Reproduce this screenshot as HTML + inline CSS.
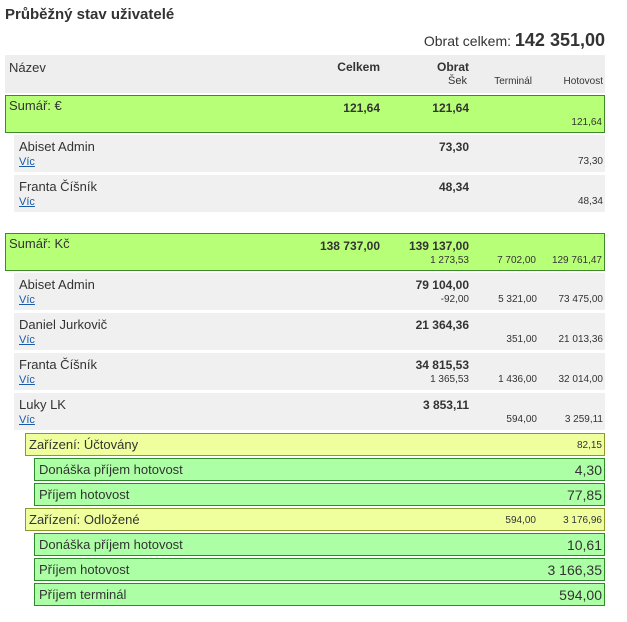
<!DOCTYPE html>
<html><head><meta charset="utf-8">
<style>
*{margin:0;padding:0;box-sizing:border-box}
body{width:627px;height:622px;background:#fff;font-family:"Liberation Sans",Arial,sans-serif;color:#333;position:relative;overflow:hidden}
.a{position:absolute;white-space:nowrap}
.box{position:absolute;left:5px;width:600px}
.r{position:absolute;white-space:nowrap;text-align:right}
.sum{background:#b8ff78;border:1px solid #3e8a2a}
.usr{background:#f0f0f0;left:14px;width:591px}
.yel{background:#efff9e;border:1px solid #8a9a2a;left:25px;width:580px;height:23px}
.grn{background:#adffa6;border:1px solid #2e8a2a;left:34px;width:571px;height:23px}
a{color:#1a5aa8;text-decoration:underline}
</style></head><body>
<div class="a" style="left:5px;top:6px;font-size:15px;font-weight:bold;color:#333">Průběžný stav uživatelé</div>
<div class="r" style="right:22px;top:30px;font-size:14px">Obrat celkem: <b style="font-size:18px">142 351,00</b></div>

<div class="box" style="top:55px;height:38px;background:#eee;font-size:12px">
<span class="a" style="left:4px;top:5px;font-size:13px">Název</span>
<span class="r" style="right:225px;top:5px;font-weight:bold">Celkem</span>
<span class="r" style="right:136px;top:5px;font-weight:bold">Obrat</span>
<span class="r" style="right:138px;top:20px;font-size:11px">Šek</span>
<span class="r" style="right:73px;top:21px;font-size:10px">Terminál</span>
<span class="r" style="right:2px;top:21px;font-size:10px">Hotovost</span>
</div>

<div class="box sum" style="top:95px;height:38px;font-size:12px">
<span class="a" style="left:3px;top:2px;font-size:13px">Sumář: €</span>
<span class="r" style="right:224px;top:5px;font-weight:bold">121,64</span>
<span class="r" style="right:135px;top:5px;font-weight:bold">121,64</span>
<span class="r" style="right:2px;top:21px;font-size:10px">121,64</span>
</div>

<div class="box usr" style="top:135px;height:37px">
<span class="a" style="left:5px;top:4px;font-size:13px">Abiset Admin</span>
<span class="a" style="left:5px;top:21px;font-size:11px"><a>Víc</a></span>
<span class="r" style="right:136px;top:5px;font-size:12px;font-weight:bold">73,30</span>
<span class="r" style="right:2px;top:21px;font-size:10px">73,30</span>
</div>
<div class="box usr" style="top:175px;height:37px">
<span class="a" style="left:5px;top:4px;font-size:13px">Franta Číšník</span>
<span class="a" style="left:5px;top:21px;font-size:11px"><a>Víc</a></span>
<span class="r" style="right:136px;top:5px;font-size:12px;font-weight:bold">48,34</span>
<span class="r" style="right:2px;top:21px;font-size:10px">48,34</span>
</div>

<div class="box sum" style="top:233px;height:38px;font-size:12px">
<span class="a" style="left:3px;top:2px;font-size:13px">Sumář: Kč</span>
<span class="r" style="right:224px;top:5px;font-weight:bold">138 737,00</span>
<span class="r" style="right:135px;top:5px;font-weight:bold">139 137,00</span>
<span class="r" style="right:135px;top:21px;font-size:10px">1 273,53</span>
<span class="r" style="right:68px;top:21px;font-size:10px">7 702,00</span>
<span class="r" style="right:2px;top:21px;font-size:10px">129 761,47</span>
</div>

<div class="box usr" style="top:273px;height:37px">
<span class="a" style="left:5px;top:4px;font-size:13px">Abiset Admin</span>
<span class="a" style="left:5px;top:21px;font-size:11px"><a>Víc</a></span>
<span class="r" style="right:136px;top:5px;font-size:12px;font-weight:bold">79 104,00</span>
<span class="r" style="right:136px;top:21px;font-size:10px">-92,00</span>
<span class="r" style="right:68px;top:21px;font-size:10px">5 321,00</span>
<span class="r" style="right:2px;top:21px;font-size:10px">73 475,00</span>
</div>
<div class="box usr" style="top:313px;height:37px">
<span class="a" style="left:5px;top:4px;font-size:13px">Daniel Jurkovič</span>
<span class="a" style="left:5px;top:21px;font-size:11px"><a>Víc</a></span>
<span class="r" style="right:136px;top:5px;font-size:12px;font-weight:bold">21 364,36</span>
<span class="r" style="right:68px;top:21px;font-size:10px">351,00</span>
<span class="r" style="right:2px;top:21px;font-size:10px">21 013,36</span>
</div>
<div class="box usr" style="top:353px;height:37px">
<span class="a" style="left:5px;top:4px;font-size:13px">Franta Číšník</span>
<span class="a" style="left:5px;top:21px;font-size:11px"><a>Víc</a></span>
<span class="r" style="right:136px;top:5px;font-size:12px;font-weight:bold">34 815,53</span>
<span class="r" style="right:136px;top:21px;font-size:10px">1 365,53</span>
<span class="r" style="right:68px;top:21px;font-size:10px">1 436,00</span>
<span class="r" style="right:2px;top:21px;font-size:10px">32 014,00</span>
</div>
<div class="box usr" style="top:393px;height:37px">
<span class="a" style="left:5px;top:4px;font-size:13px">Luky LK</span>
<span class="a" style="left:5px;top:21px;font-size:11px"><a>Víc</a></span>
<span class="r" style="right:136px;top:5px;font-size:12px;font-weight:bold">3 853,11</span>
<span class="r" style="right:68px;top:21px;font-size:10px">594,00</span>
<span class="r" style="right:2px;top:21px;font-size:10px">3 259,11</span>
</div>

<div class="box yel" style="top:433px">
<span class="a" style="left:3px;top:3px;font-size:13px">Zařízení: Účtovány</span>
<span class="r" style="right:2px;top:6px;font-size:10px">82,15</span>
</div>
<div class="box grn" style="top:458px">
<span class="a" style="left:4px;top:3px;font-size:13px">Donáška příjem hotovost</span>
<span class="r" style="right:2px;top:3px;font-size:14px">4,30</span>
</div>
<div class="box grn" style="top:483px">
<span class="a" style="left:4px;top:3px;font-size:13px">Příjem hotovost</span>
<span class="r" style="right:2px;top:3px;font-size:14px">77,85</span>
</div>
<div class="box yel" style="top:508px">
<span class="a" style="left:3px;top:3px;font-size:13px">Zařízení: Odložené</span>
<span class="r" style="right:68px;top:6px;font-size:10px">594,00</span>
<span class="r" style="right:2px;top:6px;font-size:10px">3 176,96</span>
</div>
<div class="box grn" style="top:533px">
<span class="a" style="left:4px;top:3px;font-size:13px">Donáška příjem hotovost</span>
<span class="r" style="right:2px;top:3px;font-size:14px">10,61</span>
</div>
<div class="box grn" style="top:558px">
<span class="a" style="left:4px;top:3px;font-size:13px">Příjem hotovost</span>
<span class="r" style="right:2px;top:3px;font-size:14px">3 166,35</span>
</div>
<div class="box grn" style="top:583px">
<span class="a" style="left:4px;top:3px;font-size:13px">Příjem terminál</span>
<span class="r" style="right:2px;top:3px;font-size:14px">594,00</span>
</div>
</body></html>
